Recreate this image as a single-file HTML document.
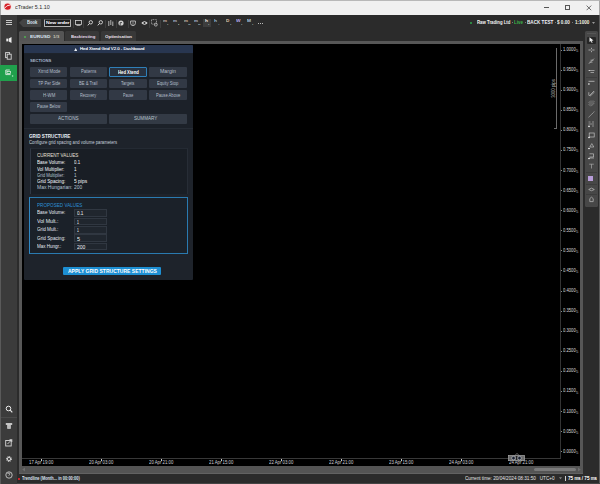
<!DOCTYPE html>
<html><head><meta charset="utf-8">
<style>
*{margin:0;padding:0;box-sizing:border-box}
html,body{width:600px;height:484px;overflow:hidden;background:#2b2b2b;font-family:"Liberation Sans",sans-serif;position:relative}
div,svg{position:absolute;white-space:nowrap}
span{white-space:nowrap}
</style></head><body>
<div style="left:0px;top:0px;width:600px;height:15px;background:#f0f0f0;border-top:1px solid #b8b8b8;border-left:1px solid #a8a8a8;border-right:1px solid #a8a8a8"></div>
<svg style="left:3px;top:2.4px" width="9" height="9" viewBox="0 0 9 9"><circle cx="4.6" cy="4.6" r="4" fill="#f6dede"/><circle cx="4.6" cy="4.6" r="3.2" fill="#d42027"/><path d="M1.6 6.2Q3.2 3.2 7.8 2.8" stroke="#fbeaea" stroke-width="1" fill="none"/></svg>
<div style="left:14.79px;top:4.71px;font-size:5.6px;line-height:5.6px;color:#2a2a2a;font-weight:400;transform:scaleX(0.957);transform-origin:0 0;">cTrader 5.1.10</div>
<div style="left:544px;top:7px;width:5px;height:0.9px;background:#555"></div>
<div style="left:564.8px;top:4.8px;width:5px;height:5px;border:0.9px solid #555"></div>
<svg style="left:586.3px;top:4.5px" width="6" height="6" viewBox="0 0 6 6"><path d="M0.6 0.6L5.2 5.2M5.2 0.6L0.6 5.2" stroke="#555" stroke-width="0.85"/></svg>
<div style="left:0px;top:15px;width:600px;height:14px;background:#2b2b2b"></div>
<div style="left:0px;top:15px;width:17px;height:469px;background:#3b3b3b;border-left:1px solid #5a5a5a"></div>
<div style="left:5.6px;top:20px;width:6.4px;height:0.9px;background:#c8c8c8"></div>
<div style="left:5.6px;top:22.1px;width:6.4px;height:0.9px;background:#c8c8c8"></div>
<div style="left:5.6px;top:24.2px;width:6.4px;height:0.9px;background:#c8c8c8"></div>
<svg style="left:19px;top:19px" width="23" height="8" viewBox="0 0 23 8"><path d="M0 3.8L4 0H22V8H4Z" fill="#444"/></svg>
<div style="left:26.83px;top:20.84px;font-size:4.7px;line-height:4.7px;color:#dce8f4;font-weight:700;transform:scaleX(0.882);transform-origin:0 0;">Book</div>
<div style="left:43.5px;top:19px;width:27.5px;height:8px;background:#1f1f1f;border:0.9px solid #b4b4b4;border-top-color:#505050;border-radius:1px"></div>
<div style="left:72.5px;top:19.5px;width:0.8px;height:8px;background:#3e3e3e"></div>
<div style="left:45.80px;top:20.99px;font-size:4.4px;line-height:4.4px;color:#f0f0f8;font-weight:400;transform:scaleX(1.155);transform-origin:0 0;text-shadow:0 0 0.3px #fff">New order</div>
<div style="left:83.3px;top:19.5px;width:0.8px;height:8px;background:#3e3e3e"></div>
<div style="left:104.8px;top:19.5px;width:0.8px;height:8px;background:#3e3e3e"></div>
<div style="left:116px;top:19.5px;width:0.8px;height:8px;background:#3e3e3e"></div>
<div style="left:127.5px;top:19.5px;width:0.8px;height:8px;background:#3e3e3e"></div>
<div style="left:149px;top:19.5px;width:0.8px;height:8px;background:#3e3e3e"></div>
<div style="left:160px;top:19.5px;width:0.8px;height:8px;background:#3e3e3e"></div>
<svg style="left:74.5px;top:19.5px" width="7" height="6" viewBox="0 0 7 6"><rect x="0.5" y="0.5" width="6" height="4" fill="none" stroke="#d4d4d4" stroke-width="0.8"/><path d="M1.5 5.5H5.5" stroke="#d4d4d4" stroke-width="0.7"/></svg>
<svg style="left:86.5px;top:19.5px" width="6" height="6" viewBox="0 0 6 6"><circle cx="3.8" cy="2.3" r="1.7" fill="none" stroke="#ddd" stroke-width="0.9"/><path d="M2.6 3.5L0.7 5.4" stroke="#ddd" stroke-width="1"/></svg>
<svg style="left:96.5px;top:19.5px" width="6" height="6" viewBox="0 0 6 6"><circle cx="3.8" cy="2.3" r="1.7" fill="none" stroke="#ddd" stroke-width="0.9"/><path d="M2.6 3.5L0.7 5.4" stroke="#ddd" stroke-width="1"/></svg>
<svg style="left:107.5px;top:19.5px" width="6" height="7" viewBox="0 0 6 7"><path d="M0.8 1V6M2.8 0V5M4.8 1.5V6" stroke="#d4d4d4" stroke-width="0.8"/></svg>
<svg style="left:118px;top:19.5px" width="6" height="6" viewBox="0 0 6 6"><circle cx="3" cy="3" r="2.6" fill="#d0d0d0"/><path d="M2.2 5.6V2.6H4" stroke="#2b2b2b" stroke-width="0.8" fill="none"/></svg>
<svg style="left:130px;top:19.5px" width="6" height="6" viewBox="0 0 6 6"><path d="M0.6 1H5.4V3.2Q5.4 5.4 3 5.8Q0.6 5.4 0.6 3.2Z" fill="none" stroke="#d4d4d4" stroke-width="0.8"/><path d="M3 1.5V5" stroke="#d4d4d4" stroke-width="0.6"/></svg>
<svg style="left:141.3px;top:19.6px" width="7" height="6" viewBox="0 0 7 6"><path d="M0.3 3Q3.5 -0.4 6.7 3Q3.5 6.4 0.3 3Z" fill="#e0e0e0"/><circle cx="3.5" cy="3" r="1.1" fill="#2b2b2b"/></svg>
<svg style="left:151px;top:19px" width="7" height="8" viewBox="0 0 7 8"><rect x="0.5" y="0.6" width="5" height="4.5" fill="none" stroke="#d4d4d4" stroke-width="0.6" stroke-dasharray="1 0.6"/><circle cx="4.8" cy="5.6" r="1.5" fill="none" stroke="#d0d0d0" stroke-width="0.7"/></svg>
<div style="left:163.12px;top:20.28px;font-size:3.8px;line-height:3.8px;color:#c8b8b0;font-weight:700;transform:scaleX(1.166);transform-origin:0 0;">m</div>
<div style="left:167.31px;top:24.15px;font-size:2.4px;line-height:2.4px;color:#b8c0c8;font-weight:700;transform:scaleX(0.955);transform-origin:0 0;">1</div>
<div style="left:173.32px;top:20.28px;font-size:3.8px;line-height:3.8px;color:#b0bcd0;font-weight:700;transform:scaleX(1.166);transform-origin:0 0;">m</div>
<div style="left:177.51px;top:24.15px;font-size:2.4px;line-height:2.4px;color:#b8c0c8;font-weight:700;transform:scaleX(0.955);transform-origin:0 0;">5</div>
<div style="left:183.82px;top:20.28px;font-size:3.8px;line-height:3.8px;color:#c8bca8;font-weight:700;transform:scaleX(1.166);transform-origin:0 0;">m</div>
<div style="left:188.01px;top:24.15px;font-size:2.4px;line-height:2.4px;color:#b8c0c8;font-weight:700;transform:scaleX(0.887);transform-origin:0 0;">15</div>
<div style="left:194.12px;top:20.28px;font-size:3.8px;line-height:3.8px;color:#b0bcd0;font-weight:700;transform:scaleX(1.166);transform-origin:0 0;">m</div>
<div style="left:198.31px;top:24.15px;font-size:2.4px;line-height:2.4px;color:#b8c0c8;font-weight:700;transform:scaleX(0.887);transform-origin:0 0;">30</div>
<div style="left:203px;top:19px;width:8px;height:7.7px;background:#3d3d3d"></div>
<div style="left:204.50px;top:20.28px;font-size:3.8px;line-height:3.8px;color:#f0e8e8;font-weight:700;transform:scaleX(1.285);transform-origin:0 0;">h</div>
<div style="left:207.71px;top:24.15px;font-size:2.4px;line-height:2.4px;color:#b8c0c8;font-weight:700;transform:scaleX(0.955);transform-origin:0 0;">1</div>
<div style="left:214.30px;top:20.28px;font-size:3.8px;line-height:3.8px;color:#98b8d8;font-weight:700;transform:scaleX(1.285);transform-origin:0 0;">h</div>
<div style="left:217.51px;top:24.15px;font-size:2.4px;line-height:2.4px;color:#b8c0c8;font-weight:700;transform:scaleX(0.955);transform-origin:0 0;">4</div>
<div style="left:226.11px;top:20.28px;font-size:3.8px;line-height:3.8px;color:#e0c8b0;font-weight:700;transform:scaleX(1.226);transform-origin:0 0;">D</div>
<div style="left:229.71px;top:24.15px;font-size:2.4px;line-height:2.4px;color:#b8c0c8;font-weight:700;transform:scaleX(0.955);transform-origin:0 0;">1</div>
<div style="left:236.31px;top:20.28px;font-size:3.8px;line-height:3.8px;color:#b8a8e8;font-weight:700;transform:scaleX(1.277);transform-origin:0 0;">W</div>
<div style="left:241.11px;top:24.15px;font-size:2.4px;line-height:2.4px;color:#b8c0c8;font-weight:700;transform:scaleX(0.955);transform-origin:0 0;">1</div>
<div style="left:247.31px;top:20.28px;font-size:3.8px;line-height:3.8px;color:#b0c8e4;font-weight:700;transform:scaleX(1.255);transform-origin:0 0;">M</div>
<div style="left:251.51px;top:24.15px;font-size:2.4px;line-height:2.4px;color:#b8c0c8;font-weight:700;transform:scaleX(0.955);transform-origin:0 0;">1</div>
<div style="left:257.5px;top:22.5px;width:1px;height:1px;background:#bbb"></div>
<div style="left:259.8px;top:22.5px;width:1px;height:1px;background:#bbb"></div>
<div style="left:262.1px;top:22.5px;width:1px;height:1px;background:#bbb"></div>
<div style="left:470.2px;top:21.8px;width:2px;height:2px;border-radius:1px;background:#2ea84a"></div>
<div style="left:476.83px;top:20.80px;font-size:4.8px;line-height:4.8px;color:#f4f4f4;font-weight:700;transform:scaleX(0.894);transform-origin:0 0;">Raw Trading Ltd</div>
<div style="left:512px;top:22.3px;width:1px;height:1px;background:#777"></div>
<div style="left:514.32px;top:20.80px;font-size:4.8px;line-height:4.8px;color:#3cb44a;font-weight:700;transform:scaleX(0.921);transform-origin:0 0;">Live</div>
<div style="left:525px;top:22.3px;width:1px;height:1px;background:#777"></div>
<div style="left:526.82px;top:20.80px;font-size:4.8px;line-height:4.8px;color:#eef2f8;font-weight:700;transform:scaleX(0.961);transform-origin:0 0;">BACK TEST</div>
<div style="left:555px;top:22.3px;width:1px;height:1px;background:#777"></div>
<div style="left:557.31px;top:20.80px;font-size:4.8px;line-height:4.8px;color:#f0f0f0;font-weight:700;transform:scaleX(0.965);transform-origin:0 0;">$ 0.00</div>
<div style="left:572.3px;top:22.3px;width:1px;height:1px;background:#777"></div>
<div style="left:574.82px;top:20.80px;font-size:4.8px;line-height:4.8px;color:#f4efe0;font-weight:700;transform:scaleX(0.962);transform-origin:0 0;">1:1000</div>
<svg style="left:592px;top:21.5px" width="3" height="2" viewBox="0 0 3 2"><path d="M0 0H3L1.5 2Z" fill="#999"/></svg>
<svg style="left:5.5px;top:36.8px" width="6" height="6" viewBox="0 0 6 6"><rect x="0.3" y="1.6" width="2" height="2.8" fill="#ececec"/><path d="M2.8 1.5L5.5 0V6L2.8 4.5Z" fill="#ececec"/></svg>
<svg style="left:5.3px;top:52.3px" width="7" height="8" viewBox="0 0 7 8"><rect x="0.6" y="0.6" width="4" height="5" fill="none" stroke="#d8d8d8" stroke-width="0.9"/><rect x="2.2" y="2.2" width="4" height="5" fill="#3b3b3b" stroke="#d8d8d8" stroke-width="0.9"/></svg>
<div style="left:0px;top:64.7px;width:17px;height:16px;background:#20a04c"></div>
<svg style="left:5px;top:69px" width="9" height="9" viewBox="0 0 9 9"><path d="M0.8 1H4.8M0.8 1V5.6H5.6" stroke="#f4f4f4" stroke-width="0.8" fill="none"/><rect x="2" y="2.6" width="3.6" height="2" fill="none" stroke="#f4f4f4" stroke-width="0.7"/><circle cx="7.6" cy="7" r="0.8" fill="#a8f0c0"/></svg>
<div style="left:1px;top:417px;width:16px;height:0.8px;background:#4a4a4a"></div>
<svg style="left:4.5px;top:405px" width="8" height="8" viewBox="0 0 8 8"><circle cx="3.5" cy="3.5" r="2.3" fill="none" stroke="#ececec" stroke-width="1"/><path d="M5.2 5.2L7.3 7.3" stroke="#ececec" stroke-width="1.1"/></svg>
<svg style="left:5px;top:421.5px" width="8" height="8" viewBox="0 0 8 8"><path d="M0.8 1.2H7.2V2.8H0.8Z" fill="#e4e4e4"/><path d="M2.3 2.8V6.8H5.7V2.8Z" fill="#e4e4e4"/><path d="M4 3.2V6.4" stroke="#3b3b3b" stroke-width="0.5"/></svg>
<svg style="left:5px;top:438.5px" width="8" height="8" viewBox="0 0 8 8"><rect x="0.7" y="1.5" width="5.5" height="5.5" fill="none" stroke="#d8d8d8" stroke-width="0.9"/><path d="M2.5 5L6.8 0.7M4.5 0.7H6.8V3" stroke="#d8d8d8" stroke-width="0.9" fill="none"/></svg>
<svg style="left:5px;top:454.5px" width="8" height="8" viewBox="0 0 8 8"><circle cx="4" cy="4" r="2.5" fill="none" stroke="#e4e4e4" stroke-width="1" stroke-dasharray="1.1 0.85"/><circle cx="4" cy="4" r="1.6" fill="none" stroke="#e4e4e4" stroke-width="0.9"/></svg>
<svg style="left:4.5px;top:471px" width="8" height="8" viewBox="0 0 8 8"><circle cx="4" cy="4" r="3.2" fill="none" stroke="#d8d8d8" stroke-width="0.8"/><path d="M2.6 3Q3 1.8 4.2 2Q5.3 2.4 4.5 3.6L3.8 4.6" stroke="#d8d8d8" stroke-width="0.8" fill="none"/></svg>
<div style="left:19px;top:31px;width:45px;height:11px;background:#555;border-radius:1.5px 1.5px 0 0"></div>
<div style="left:23.6px;top:35.5px;width:2px;height:2px;border-radius:1px;background:#52b052"></div>
<div style="left:29.81px;top:34.83px;font-size:4.1px;line-height:4.1px;color:#dce6f2;font-weight:700;transform:scaleX(1.179);transform-origin:0 0;">EURUSD</div>
<div style="left:53.32px;top:34.83px;font-size:4.1px;line-height:4.1px;color:#e8e4dc;font-weight:400;transform:scaleX(1.116);transform-origin:0 0;">1/3</div>
<div style="left:65.3px;top:31px;width:33.4px;height:10px;background:#383838;border-radius:1.5px 1.5px 0 0"></div>
<div style="left:70.53px;top:34.93px;font-size:4.1px;line-height:4.1px;color:#e6d8ec;font-weight:700;transform:scaleX(1.048);transform-origin:0 0;">Backtesting</div>
<div style="left:101.3px;top:31px;width:34.7px;height:10px;background:#383838;border-radius:1.5px 1.5px 0 0"></div>
<div style="left:105.12px;top:34.93px;font-size:4.1px;line-height:4.1px;color:#ece4ec;font-weight:700;transform:scaleX(1.081);transform-origin:0 0;">Optimisation</div>
<div style="left:19px;top:41px;width:564px;height:432.5px;background:#575757"></div>
<div style="left:22px;top:44px;width:558px;height:421.7px;background:#000"></div>
<div style="left:560px;top:44px;width:1px;height:414.5px;background:#333"></div>
<div style="left:22px;top:458px;width:539px;height:1px;background:#383838"></div>
<div style="left:561px;top:49.5px;width:0.9px;height:0.9px;background:#8a8a8a"></div>
<div style="left:563.03px;top:48.00px;font-size:4.8px;line-height:4.8px;color:#dcdcdc;font-weight:400;transform:scaleX(0.868);transform-origin:0 0;">1.0000</div>
<div style="left:575.63px;top:50.06px;font-size:2.8px;line-height:2.8px;color:#a8b0c0;font-weight:400;transform:scaleX(1.494);transform-origin:0 0;">5</div>
<div style="left:561px;top:69.5px;width:0.9px;height:0.9px;background:#8a8a8a"></div>
<div style="left:563.03px;top:68.08px;font-size:4.8px;line-height:4.8px;color:#dcdcdc;font-weight:400;transform:scaleX(0.868);transform-origin:0 0;">0.9500</div>
<div style="left:575.63px;top:70.14px;font-size:2.8px;line-height:2.8px;color:#a8b0c0;font-weight:400;transform:scaleX(1.494);transform-origin:0 0;">5</div>
<div style="left:561px;top:89.5px;width:0.9px;height:0.9px;background:#8a8a8a"></div>
<div style="left:563.03px;top:88.17px;font-size:4.8px;line-height:4.8px;color:#dcdcdc;font-weight:400;transform:scaleX(0.868);transform-origin:0 0;">0.9000</div>
<div style="left:575.63px;top:90.23px;font-size:2.8px;line-height:2.8px;color:#a8b0c0;font-weight:400;transform:scaleX(1.494);transform-origin:0 0;">5</div>
<div style="left:561px;top:109.5px;width:0.9px;height:0.9px;background:#8a8a8a"></div>
<div style="left:563.03px;top:108.25px;font-size:4.8px;line-height:4.8px;color:#dcdcdc;font-weight:400;transform:scaleX(0.868);transform-origin:0 0;">0.8500</div>
<div style="left:575.63px;top:110.31px;font-size:2.8px;line-height:2.8px;color:#a8b0c0;font-weight:400;transform:scaleX(1.494);transform-origin:0 0;">5</div>
<div style="left:561px;top:129.5px;width:0.9px;height:0.9px;background:#8a8a8a"></div>
<div style="left:563.03px;top:128.34px;font-size:4.8px;line-height:4.8px;color:#dcdcdc;font-weight:400;transform:scaleX(0.868);transform-origin:0 0;">0.8000</div>
<div style="left:575.63px;top:130.40px;font-size:2.8px;line-height:2.8px;color:#a8b0c0;font-weight:400;transform:scaleX(1.494);transform-origin:0 0;">5</div>
<div style="left:561px;top:149.5px;width:0.9px;height:0.9px;background:#8a8a8a"></div>
<div style="left:563.03px;top:148.42px;font-size:4.8px;line-height:4.8px;color:#dcdcdc;font-weight:400;transform:scaleX(0.868);transform-origin:0 0;">0.7500</div>
<div style="left:575.63px;top:150.48px;font-size:2.8px;line-height:2.8px;color:#a8b0c0;font-weight:400;transform:scaleX(1.494);transform-origin:0 0;">5</div>
<div style="left:561px;top:170.0px;width:0.9px;height:0.9px;background:#8a8a8a"></div>
<div style="left:563.03px;top:168.51px;font-size:4.8px;line-height:4.8px;color:#dcdcdc;font-weight:400;transform:scaleX(0.868);transform-origin:0 0;">0.7000</div>
<div style="left:575.63px;top:170.57px;font-size:2.8px;line-height:2.8px;color:#a8b0c0;font-weight:400;transform:scaleX(1.494);transform-origin:0 0;">5</div>
<div style="left:561px;top:190.0px;width:0.9px;height:0.9px;background:#8a8a8a"></div>
<div style="left:563.03px;top:188.59px;font-size:4.8px;line-height:4.8px;color:#dcdcdc;font-weight:400;transform:scaleX(0.868);transform-origin:0 0;">0.6500</div>
<div style="left:575.63px;top:190.65px;font-size:2.8px;line-height:2.8px;color:#a8b0c0;font-weight:400;transform:scaleX(1.494);transform-origin:0 0;">5</div>
<div style="left:561px;top:210.0px;width:0.9px;height:0.9px;background:#8a8a8a"></div>
<div style="left:563.03px;top:208.68px;font-size:4.8px;line-height:4.8px;color:#dcdcdc;font-weight:400;transform:scaleX(0.868);transform-origin:0 0;">0.6000</div>
<div style="left:575.63px;top:210.74px;font-size:2.8px;line-height:2.8px;color:#a8b0c0;font-weight:400;transform:scaleX(1.494);transform-origin:0 0;">5</div>
<div style="left:561px;top:230.0px;width:0.9px;height:0.9px;background:#8a8a8a"></div>
<div style="left:563.03px;top:228.76px;font-size:4.8px;line-height:4.8px;color:#dcdcdc;font-weight:400;transform:scaleX(0.868);transform-origin:0 0;">0.5500</div>
<div style="left:575.63px;top:230.82px;font-size:2.8px;line-height:2.8px;color:#a8b0c0;font-weight:400;transform:scaleX(1.494);transform-origin:0 0;">5</div>
<div style="left:561px;top:250.0px;width:0.9px;height:0.9px;background:#8a8a8a"></div>
<div style="left:563.03px;top:248.85px;font-size:4.8px;line-height:4.8px;color:#dcdcdc;font-weight:400;transform:scaleX(0.868);transform-origin:0 0;">0.5000</div>
<div style="left:575.63px;top:250.91px;font-size:2.8px;line-height:2.8px;color:#a8b0c0;font-weight:400;transform:scaleX(1.494);transform-origin:0 0;">5</div>
<div style="left:561px;top:270.0px;width:0.9px;height:0.9px;background:#8a8a8a"></div>
<div style="left:563.03px;top:268.93px;font-size:4.8px;line-height:4.8px;color:#dcdcdc;font-weight:400;transform:scaleX(0.868);transform-origin:0 0;">0.4500</div>
<div style="left:575.63px;top:270.99px;font-size:2.8px;line-height:2.8px;color:#a8b0c0;font-weight:400;transform:scaleX(1.494);transform-origin:0 0;">5</div>
<div style="left:561px;top:290.5px;width:0.9px;height:0.9px;background:#8a8a8a"></div>
<div style="left:563.03px;top:289.02px;font-size:4.8px;line-height:4.8px;color:#dcdcdc;font-weight:400;transform:scaleX(0.868);transform-origin:0 0;">0.4000</div>
<div style="left:575.63px;top:291.08px;font-size:2.8px;line-height:2.8px;color:#a8b0c0;font-weight:400;transform:scaleX(1.494);transform-origin:0 0;">5</div>
<div style="left:561px;top:310.5px;width:0.9px;height:0.9px;background:#8a8a8a"></div>
<div style="left:563.03px;top:309.10px;font-size:4.8px;line-height:4.8px;color:#dcdcdc;font-weight:400;transform:scaleX(0.868);transform-origin:0 0;">0.3500</div>
<div style="left:575.63px;top:311.16px;font-size:2.8px;line-height:2.8px;color:#a8b0c0;font-weight:400;transform:scaleX(1.494);transform-origin:0 0;">5</div>
<div style="left:561px;top:330.5px;width:0.9px;height:0.9px;background:#8a8a8a"></div>
<div style="left:563.03px;top:329.19px;font-size:4.8px;line-height:4.8px;color:#dcdcdc;font-weight:400;transform:scaleX(0.868);transform-origin:0 0;">0.3000</div>
<div style="left:575.63px;top:331.25px;font-size:2.8px;line-height:2.8px;color:#a8b0c0;font-weight:400;transform:scaleX(1.494);transform-origin:0 0;">5</div>
<div style="left:561px;top:350.5px;width:0.9px;height:0.9px;background:#8a8a8a"></div>
<div style="left:563.03px;top:349.27px;font-size:4.8px;line-height:4.8px;color:#dcdcdc;font-weight:400;transform:scaleX(0.868);transform-origin:0 0;">0.2500</div>
<div style="left:575.63px;top:351.33px;font-size:2.8px;line-height:2.8px;color:#a8b0c0;font-weight:400;transform:scaleX(1.494);transform-origin:0 0;">5</div>
<div style="left:561px;top:370.5px;width:0.9px;height:0.9px;background:#8a8a8a"></div>
<div style="left:563.03px;top:369.36px;font-size:4.8px;line-height:4.8px;color:#dcdcdc;font-weight:400;transform:scaleX(0.868);transform-origin:0 0;">0.2000</div>
<div style="left:575.63px;top:371.42px;font-size:2.8px;line-height:2.8px;color:#a8b0c0;font-weight:400;transform:scaleX(1.494);transform-origin:0 0;">5</div>
<div style="left:561px;top:390.5px;width:0.9px;height:0.9px;background:#8a8a8a"></div>
<div style="left:563.03px;top:389.44px;font-size:4.8px;line-height:4.8px;color:#dcdcdc;font-weight:400;transform:scaleX(0.868);transform-origin:0 0;">0.1500</div>
<div style="left:575.63px;top:391.50px;font-size:2.8px;line-height:2.8px;color:#a8b0c0;font-weight:400;transform:scaleX(1.494);transform-origin:0 0;">5</div>
<div style="left:561px;top:411.0px;width:0.9px;height:0.9px;background:#8a8a8a"></div>
<div style="left:563.03px;top:409.53px;font-size:4.8px;line-height:4.8px;color:#dcdcdc;font-weight:400;transform:scaleX(0.868);transform-origin:0 0;">0.1000</div>
<div style="left:575.63px;top:411.59px;font-size:2.8px;line-height:2.8px;color:#a8b0c0;font-weight:400;transform:scaleX(1.494);transform-origin:0 0;">5</div>
<div style="left:561px;top:431.0px;width:0.9px;height:0.9px;background:#8a8a8a"></div>
<div style="left:563.03px;top:429.61px;font-size:4.8px;line-height:4.8px;color:#dcdcdc;font-weight:400;transform:scaleX(0.868);transform-origin:0 0;">0.0500</div>
<div style="left:575.63px;top:431.67px;font-size:2.8px;line-height:2.8px;color:#a8b0c0;font-weight:400;transform:scaleX(1.494);transform-origin:0 0;">5</div>
<div style="left:561px;top:451.0px;width:0.9px;height:0.9px;background:#8a8a8a"></div>
<div style="left:563.03px;top:449.70px;font-size:4.8px;line-height:4.8px;color:#dcdcdc;font-weight:400;transform:scaleX(0.868);transform-origin:0 0;">0.0000</div>
<div style="left:575.63px;top:451.76px;font-size:2.8px;line-height:2.8px;color:#a8b0c0;font-weight:400;transform:scaleX(1.494);transform-origin:0 0;">5</div>
<div style="left:41.3px;top:458.5px;width:0.9px;height:2.3px;background:#c8c8c8"></div>
<div style="left:29.33px;top:460.89px;font-size:4.6px;line-height:4.6px;color:#d0d0d8;font-weight:400;transform:scaleX(0.934);transform-origin:0 0;">17 Apr 19:00</div>
<div style="left:101.3px;top:458.5px;width:0.9px;height:2.3px;background:#c8c8c8"></div>
<div style="left:89.33px;top:460.89px;font-size:4.6px;line-height:4.6px;color:#d0d0d8;font-weight:400;transform:scaleX(0.934);transform-origin:0 0;">20 Apr 03:00</div>
<div style="left:161.3px;top:458.5px;width:0.9px;height:2.3px;background:#c8c8c8"></div>
<div style="left:149.33px;top:460.89px;font-size:4.6px;line-height:4.6px;color:#d0d0d8;font-weight:400;transform:scaleX(0.934);transform-origin:0 0;">20 Apr 21:00</div>
<div style="left:221.3px;top:458.5px;width:0.9px;height:2.3px;background:#c8c8c8"></div>
<div style="left:209.33px;top:460.89px;font-size:4.6px;line-height:4.6px;color:#d0d0d8;font-weight:400;transform:scaleX(0.934);transform-origin:0 0;">21 Apr 15:00</div>
<div style="left:281.3px;top:458.5px;width:0.9px;height:2.3px;background:#c8c8c8"></div>
<div style="left:269.33px;top:460.89px;font-size:4.6px;line-height:4.6px;color:#d0d0d8;font-weight:400;transform:scaleX(0.934);transform-origin:0 0;">22 Apr 03:00</div>
<div style="left:341.3px;top:458.5px;width:0.9px;height:2.3px;background:#c8c8c8"></div>
<div style="left:329.33px;top:460.89px;font-size:4.6px;line-height:4.6px;color:#d0d0d8;font-weight:400;transform:scaleX(0.934);transform-origin:0 0;">22 Apr 21:00</div>
<div style="left:401.3px;top:458.5px;width:0.9px;height:2.3px;background:#c8c8c8"></div>
<div style="left:389.33px;top:460.89px;font-size:4.6px;line-height:4.6px;color:#d0d0d8;font-weight:400;transform:scaleX(0.934);transform-origin:0 0;">23 Apr 15:00</div>
<div style="left:461.3px;top:458.5px;width:0.9px;height:2.3px;background:#c8c8c8"></div>
<div style="left:449.33px;top:460.89px;font-size:4.6px;line-height:4.6px;color:#d0d0d8;font-weight:400;transform:scaleX(0.934);transform-origin:0 0;">24 Apr 03:00</div>
<div style="left:521.3px;top:458.5px;width:0.9px;height:2.3px;background:#c8c8c8"></div>
<div style="left:509.33px;top:460.89px;font-size:4.6px;line-height:4.6px;color:#d0d0d8;font-weight:400;transform:scaleX(0.934);transform-origin:0 0;">24 Apr 21:00</div>
<div style="left:556px;top:48.3px;width:0.7px;height:80px;background:#6a6a6a"></div>
<div style="left:554px;top:128.3px;width:2.7px;height:0.7px;background:#6a6a6a"></div>
<div style="left:533px;top:86px;width:40px;text-align:center;font-size:4.5px;line-height:5px;color:#b0b0b0;transform:rotate(-90deg) scaleX(0.95)">3000 pips</div>
<svg style="left:507.5px;top:452.5px" width="17" height="8.5" viewBox="0 0 17 8.5"><rect x="0.5" y="2.5" width="16" height="5.2" fill="#6c6c6c" stroke="#a8a8a8" stroke-width="0.7"/><circle cx="5.5" cy="5.1" r="1.8" fill="#1a2030" stroke="#c8ccd4" stroke-width="0.6"/><circle cx="11.5" cy="5.1" r="1.8" fill="#1a2030" stroke="#c8ccd4" stroke-width="0.6"/><path d="M7 2.4L9 0.4L11 2.4" stroke="#b0b0b0" stroke-width="0.6" fill="none"/><rect x="8" y="3" width="1.2" height="4" fill="#222"/></svg>
<div style="left:22px;top:465.7px;width:558px;height:7.5px;background:#545454"></div>
<svg style="left:21px;top:467px" width="5" height="5" viewBox="0 0 5 5"><path d="M4 0.6L1.2 2.5L4 4.4Z" fill="#6e6e6e"/></svg>
<div style="left:19px;top:472.6px;width:564px;height:0.9px;background:#626262"></div>
<div style="left:533.7px;top:468px;width:42.3px;height:3.2px;border-radius:1.6px;background:#7a7a7a"></div>
<svg style="left:576.5px;top:467px" width="5" height="5" viewBox="0 0 5 5"><path d="M1 0.6L3.8 2.5L1 4.4Z" fill="#6e6e6e"/></svg>
<div style="left:585.1px;top:31.2px;width:12.8px;height:175.5px;background:#474747;border-radius:1.5px"></div>
<div style="left:587px;top:32.5px;width:9px;height:1.2px;background:#565656"></div>
<div style="left:587px;top:36.8px;width:8.5px;height:6.8px;background:#262626;border-radius:1px"></div>
<svg style="left:589px;top:37.3px" width="5" height="6" viewBox="0 0 5 6"><path d="M0.5 0.3L4.5 3.5L2.6 3.7L3.6 5.6L2.8 5.9L1.9 4L0.5 5Z" fill="#f4f4f4"/></svg>
<div style="left:586px;top:76.5px;width:11px;height:0.7px;background:#3c3c3c"></div>
<div style="left:586px;top:172px;width:11px;height:0.7px;background:#3c3c3c"></div>
<div style="left:586px;top:184px;width:11px;height:0.7px;background:#3c3c3c"></div>
<div style="left:586px;top:194px;width:11px;height:0.7px;background:#3c3c3c"></div>
<svg style="left:588px;top:47.0px" width="7" height="7" viewBox="0 0 7 7"><path d="M0.5 3H2.8M4.2 3H6.5M3.5 0.8V2.3M3.5 3.7V5.2" stroke="#cfcfcf" stroke-width="0.7"/></svg>
<svg style="left:588px;top:57.5px" width="7" height="7" viewBox="0 0 7 7"><path d="M0.8 5.8L6 0.6M1.5 4.2H4.5M2.5 2.2H5.5" stroke="#bdbdbd" stroke-width="0.7"/></svg>
<svg style="left:588px;top:68.0px" width="7" height="7" viewBox="0 0 7 7"><path d="M0.5 2.5H6.5M2.5 4.5H6" stroke="#c0c0c0" stroke-width="0.7"/><circle cx="1.4" cy="2.5" r="0.6" fill="#ddd"/></svg>
<svg style="left:588px;top:78.5px" width="7" height="7" viewBox="0 0 7 7"><path d="M0.5 2.3H6.5" stroke="#c0c0c0" stroke-width="0.8"/><circle cx="0.9" cy="5" r="0.8" fill="#fff"/></svg>
<svg style="left:588px;top:89.5px" width="7" height="7" viewBox="0 0 7 7"><path d="M1 6L6 1M2 6.2L6.5 2M0.8 2.2V5.5" stroke="#c0c0c0" stroke-width="0.7"/></svg>
<svg style="left:588px;top:100.0px" width="7" height="7" viewBox="0 0 7 7"><path d="M0.5 5L5 0.5M1.5 6L6.5 1M3 6.3L6.5 2.8M0.5 3L3 0.5" stroke="#8c8c8c" stroke-width="0.8"/></svg>
<svg style="left:588px;top:110.5px" width="7" height="7" viewBox="0 0 7 7"><path d="M0.6 6.3L6.2 0.7" stroke="#c8c8c8" stroke-width="0.9" stroke-dasharray="1 0.5"/></svg>
<svg style="left:588px;top:121.0px" width="7" height="7" viewBox="0 0 7 7"><path d="M0.5 1H2.5M4 1H6M0.5 3H6M4 5H6" stroke="#b0b0b0" stroke-width="0.7"/><circle cx="1" cy="5.4" r="0.8" fill="#fff"/></svg>
<svg style="left:588px;top:131.5px" width="7" height="7" viewBox="0 0 7 7"><rect x="1.2" y="1" width="5" height="4" fill="none" stroke="#c0c0c0" stroke-width="0.7"/><circle cx="1" cy="5.5" r="0.8" fill="#fff"/></svg>
<svg style="left:588px;top:142.5px" width="7" height="7" viewBox="0 0 7 7"><path d="M3.8 0.6L5.8 4H1.8Z" fill="none" stroke="#c0c0c0" stroke-width="0.7"/><circle cx="1" cy="5.5" r="0.8" fill="#fff"/></svg>
<svg style="left:588px;top:152.5px" width="7" height="7" viewBox="0 0 7 7"><path d="M1.5 0.8H5.5V4H1.5M1.5 5H6" fill="none" stroke="#c0c0c0" stroke-width="0.7"/><circle cx="1" cy="5.5" r="0.8" fill="#fff"/></svg>
<svg style="left:588px;top:162.5px" width="7" height="7" viewBox="0 0 7 7"><path d="M1.2 1.2H5.8M3.5 1.2V5.5" stroke="#aaa" stroke-width="0.7"/></svg>
<svg style="left:588px;top:185.5px" width="7" height="7" viewBox="0 0 7 7"><path d="M0.7 3.5Q3.5 0.7 6.3 3.5Q3.5 6 0.7 3.5Z" fill="none" stroke="#c0c0c0" stroke-width="0.7"/></svg>
<svg style="left:588px;top:196.0px" width="7" height="7" viewBox="0 0 7 7"><path d="M1.8 2.6Q3.5 -0.3 5.2 2.6V5.6H1.8Z" fill="none" stroke="#c0c0c0" stroke-width="0.7"/></svg>
<div style="left:587.8px;top:175.5px;width:5.5px;height:5.8px;background:#b79cd8"></div>
<div style="left:23.7px;top:45.2px;width:169.3px;height:235.3px;background:#1e232b;border-radius:1px"></div>
<div style="left:23.7px;top:45.2px;width:169.3px;height:7.9px;background:#283650;border-radius:1px 1px 0 0"></div>
<div style="left:23.7px;top:54px;width:169.3px;height:75px;background:#1c2129"></div>
<svg style="left:74px;top:47.7px" width="3.4" height="3.4" viewBox="0 0 3.4 3.4"><path d="M1.7 0.1L3.3 3.1H0.1Z" fill="#eef2f6"/></svg>
<div style="left:79.63px;top:47.49px;font-size:4.4px;line-height:4.4px;color:#e8eef6;font-weight:400;transform:scaleX(0.979);transform-origin:0 0;text-shadow:0 0 0.3px #fff">Hed Xtend Grid V2.0 - Dashboard</div>
<div style="left:29.83px;top:58.89px;font-size:4.4px;line-height:4.4px;color:#a8b8cc;font-weight:700;transform:scaleX(0.950);transform-origin:0 0;">SECTIONS</div>
<div style="left:29.9px;top:66.8px;width:37.6px;height:9.8px;background:#323945;border-radius:1px"></div>
<div style="left:37.53px;top:69.94px;font-size:4.7px;line-height:4.7px;color:#b4becb;font-weight:400;transform:scaleX(0.922);transform-origin:0 0;">Xtrnd Mode</div>
<div style="left:69.5px;top:66.8px;width:37.6px;height:9.8px;background:#323945;border-radius:1px"></div>
<div style="left:80.64px;top:69.94px;font-size:4.7px;line-height:4.7px;color:#b4becb;font-weight:400;transform:scaleX(0.878);transform-origin:0 0;">Patterns</div>
<div style="left:109.2px;top:66.8px;width:37.6px;height:9.8px;background:#28313f;border:0.7px solid #2f7fb8;border-radius:1px"></div>
<div style="left:117.53px;top:69.80px;font-size:5px;line-height:5px;color:#ffffff;font-weight:700;transform:scaleX(0.842);transform-origin:0 0;">Hed Xtend</div>
<div style="left:149px;top:66.8px;width:37.6px;height:9.8px;background:#323945;border-radius:1px"></div>
<div style="left:159.84px;top:69.94px;font-size:4.7px;line-height:4.7px;color:#b4becb;font-weight:400;transform:scaleX(1.111);transform-origin:0 0;">Margin</div>
<div style="left:29.9px;top:78.6px;width:37.6px;height:9.8px;background:#323945;border-radius:1px"></div>
<div style="left:37.53px;top:81.74px;font-size:4.7px;line-height:4.7px;color:#b4becb;font-weight:400;transform:scaleX(0.887);transform-origin:0 0;">TP Per Side</div>
<div style="left:69.5px;top:78.6px;width:37.6px;height:9.8px;background:#323945;border-radius:1px"></div>
<div style="left:79.13px;top:81.74px;font-size:4.7px;line-height:4.7px;color:#b4becb;font-weight:400;transform:scaleX(0.879);transform-origin:0 0;">BE &amp; Trail</div>
<div style="left:109.2px;top:78.6px;width:37.6px;height:9.8px;background:#323945;border-radius:1px"></div>
<div style="left:121.34px;top:81.74px;font-size:4.7px;line-height:4.7px;color:#b4becb;font-weight:400;transform:scaleX(0.867);transform-origin:0 0;">Targets</div>
<div style="left:149px;top:78.6px;width:37.6px;height:9.8px;background:#323945;border-radius:1px"></div>
<div style="left:157.13px;top:81.74px;font-size:4.7px;line-height:4.7px;color:#b4becb;font-weight:400;transform:scaleX(0.890);transform-origin:0 0;">Equity Stop</div>
<div style="left:29.9px;top:90.4px;width:37.6px;height:9.8px;background:#323945;border-radius:1px"></div>
<div style="left:42.53px;top:93.54px;font-size:4.7px;line-height:4.7px;color:#b4becb;font-weight:400;transform:scaleX(0.930);transform-origin:0 0;">H-WM</div>
<div style="left:69.5px;top:90.4px;width:37.6px;height:9.8px;background:#323945;border-radius:1px"></div>
<div style="left:80.15px;top:93.54px;font-size:4.7px;line-height:4.7px;color:#b4becb;font-weight:400;transform:scaleX(0.823);transform-origin:0 0;">Recovery</div>
<div style="left:109.2px;top:90.4px;width:37.6px;height:9.8px;background:#323945;border-radius:1px"></div>
<div style="left:122.85px;top:93.54px;font-size:4.7px;line-height:4.7px;color:#b4becb;font-weight:400;transform:scaleX(0.774);transform-origin:0 0;">Pause</div>
<div style="left:149px;top:90.4px;width:37.6px;height:9.8px;background:#323945;border-radius:1px"></div>
<div style="left:155.63px;top:93.54px;font-size:4.7px;line-height:4.7px;color:#b4becb;font-weight:400;transform:scaleX(0.880);transform-origin:0 0;">Pause Above</div>
<div style="left:29.9px;top:102.1px;width:37.6px;height:9.8px;background:#323945;border-radius:1px"></div>
<div style="left:37.04px;top:105.24px;font-size:4.7px;line-height:4.7px;color:#b4becb;font-weight:400;transform:scaleX(0.852);transform-origin:0 0;">Pause Below</div>
<div style="left:29.9px;top:114px;width:77.2px;height:9.8px;background:#333a45;border-radius:1px"></div>
<div style="left:57.81px;top:117.24px;font-size:4.5px;line-height:4.5px;color:#b8c2ce;font-weight:400;transform:scaleX(1.033);transform-origin:0 0;">ACTIONS</div>
<div style="left:109.2px;top:114px;width:77.5px;height:9.8px;background:#333a45;border-radius:1px"></div>
<div style="left:133.82px;top:117.24px;font-size:4.5px;line-height:4.5px;color:#b8c2ce;font-weight:400;transform:scaleX(1.019);transform-origin:0 0;">SUMMARY</div>
<div style="left:23.7px;top:128.2px;width:169.3px;height:0.7px;background:#262c35"></div>
<div style="left:28.82px;top:134.00px;font-size:5px;line-height:5px;color:#e8eef6;font-weight:700;transform:scaleX(0.925);transform-origin:0 0;">GRID STRUCTURE</div>
<div style="left:28.83px;top:140.30px;font-size:5px;line-height:5px;color:#c8d2de;font-weight:400;transform:scaleX(0.848);transform-origin:0 0;">Configure grid spacing and volume parameters</div>
<div style="left:29.7px;top:147.8px;width:158px;height:46px;background:#191e25;border-left:0.9px solid #303844;border-top:0.5px solid #242a33;border-right:0.6px solid #272d36"></div>
<div style="left:36.82px;top:153.10px;font-size:5px;line-height:5px;color:#e8e0d8;font-weight:400;transform:scaleX(0.917);transform-origin:0 0;">CURRENT VALUES</div>
<div style="left:36.82px;top:160.40px;font-size:5px;line-height:5px;color:#f4f8fc;font-weight:400;transform:scaleX(0.919);transform-origin:0 0;">Base Volume:</div>
<div style="left:74.13px;top:160.40px;font-size:5px;line-height:5px;color:#f4f8fc;font-weight:400;transform:scaleX(0.870);transform-origin:0 0;">0.1</div>
<div style="left:36.82px;top:166.50px;font-size:5px;line-height:5px;color:#f4f8fc;font-weight:400;transform:scaleX(0.920);transform-origin:0 0;">Vol Multiplier:</div>
<div style="left:74.12px;top:166.50px;font-size:5px;line-height:5px;color:#f4f8fc;font-weight:400;transform:scaleX(0.924);transform-origin:0 0;">1</div>
<div style="left:36.83px;top:172.70px;font-size:5px;line-height:5px;color:#b8c4d4;font-weight:400;transform:scaleX(0.848);transform-origin:0 0;">Grid Multiplier:</div>
<div style="left:74.12px;top:172.70px;font-size:5px;line-height:5px;color:#b8c4d4;font-weight:400;transform:scaleX(0.924);transform-origin:0 0;">1</div>
<div style="left:36.81px;top:178.80px;font-size:5px;line-height:5px;color:#f4f8fc;font-weight:400;transform:scaleX(0.937);transform-origin:0 0;">Grid Spacing:</div>
<div style="left:74.10px;top:178.80px;font-size:5px;line-height:5px;color:#f4f8fc;font-weight:400;transform:scaleX(0.981);transform-origin:0 0;">5 pips</div>
<div style="left:36.80px;top:185.40px;font-size:5px;line-height:5px;color:#b8c4d4;font-weight:400;transform:scaleX(1.003);transform-origin:0 0;">Max Hungarian:</div>
<div style="left:74.11px;top:185.40px;font-size:5px;line-height:5px;color:#b8c4d4;font-weight:400;transform:scaleX(0.969);transform-origin:0 0;">200</div>
<div style="left:29px;top:196.6px;width:158.5px;height:57.2px;background:#1b2129;border:0.9px solid #2a7ab0;border-left:1.1px solid #2f88c4"></div>
<div style="left:36.82px;top:203.40px;font-size:5px;line-height:5px;color:#2d8fd5;font-weight:400;transform:scaleX(0.924);transform-origin:0 0;">PROPOSED VALUES</div>
<div style="left:36.82px;top:210.40px;font-size:5px;line-height:5px;color:#e4eaf2;font-weight:400;transform:scaleX(0.919);transform-origin:0 0;">Base Volume:</div>
<div style="left:74.1px;top:209.1px;width:32.9px;height:7.6px;background:#20262e;border:0.6px solid #303741"></div>
<div style="left:76.82px;top:211.20px;font-size:5px;line-height:5px;color:#eef2f8;font-weight:400;transform:scaleX(0.916);transform-origin:0 0;">0.1</div>
<div style="left:36.79px;top:218.90px;font-size:5px;line-height:5px;color:#e4eaf2;font-weight:400;transform:scaleX(1.041);transform-origin:0 0;">Vol Mult.:</div>
<div style="left:74.1px;top:217.8px;width:32.9px;height:7.6px;background:#20262e;border:0.6px solid #303741"></div>
<div style="left:76.87px;top:219.90px;font-size:5px;line-height:5px;color:#eef2f8;font-weight:400;transform:scaleX(0.672);transform-origin:0 0;">1</div>
<div style="left:36.81px;top:226.90px;font-size:5px;line-height:5px;color:#e4eaf2;font-weight:400;transform:scaleX(0.927);transform-origin:0 0;">Grid Mult.:</div>
<div style="left:74.1px;top:226.1px;width:32.9px;height:7.6px;background:#20262e;border:0.6px solid #303741"></div>
<div style="left:76.87px;top:228.20px;font-size:5px;line-height:5px;color:#eef2f8;font-weight:400;transform:scaleX(0.672);transform-origin:0 0;">1</div>
<div style="left:36.81px;top:235.70px;font-size:5px;line-height:5px;color:#e4eaf2;font-weight:400;transform:scaleX(0.937);transform-origin:0 0;">Grid Spacing:</div>
<div style="left:74.1px;top:234.4px;width:32.9px;height:7.6px;background:#20262e;border:0.6px solid #303741"></div>
<div style="left:76.78px;top:236.50px;font-size:5px;line-height:5px;color:#eef2f8;font-weight:400;transform:scaleX(1.092);transform-origin:0 0;">5</div>
<div style="left:36.82px;top:244.30px;font-size:5px;line-height:5px;color:#e4eaf2;font-weight:400;transform:scaleX(0.903);transform-origin:0 0;">Max Hungr.:</div>
<div style="left:74.1px;top:242.9px;width:32.9px;height:7.6px;background:#20262e;border:0.6px solid #303741"></div>
<div style="left:76.80px;top:245.00px;font-size:5px;line-height:5px;color:#eef2f8;font-weight:400;transform:scaleX(1.007);transform-origin:0 0;">200</div>
<div style="left:62.8px;top:267.3px;width:98.2px;height:7.4px;background:#1d8fd3;border-radius:1px"></div>
<div style="left:68.00px;top:269.10px;font-size:5px;line-height:5px;color:#ffffff;font-weight:700;transform:scaleX(1.003);transform-origin:0 0;">APPLY GRID STRUCTURE SETTINGS</div>
<div style="left:17px;top:473.5px;width:582px;height:10.5px;background:#2b2b2b"></div>
<div style="left:599px;top:15px;width:1px;height:469px;background:#5a5a5a"></div>
<div style="left:17px;top:483.2px;width:583px;height:0.8px;background:#444"></div>
<div style="left:18px;top:477.6px;width:2.2px;height:2.2px;background:#c8252b"></div>
<div style="left:22.34px;top:476.79px;font-size:4.6px;line-height:4.6px;color:#dce4f0;font-weight:700;transform:scaleX(0.858);transform-origin:0 0;">Trendline (Month... in 00:00:00)</div>
<div style="left:464.51px;top:476.79px;font-size:4.6px;line-height:4.6px;color:#e8e8e8;font-weight:400;transform:scaleX(1.013);transform-origin:0 0;">Current time: 20/04/2024 08:31:50&nbsp;&nbsp;&nbsp;UTC+0</div>
<svg style="left:558.5px;top:477px" width="3" height="2.5" viewBox="0 0 3 2.5"><path d="M0 0.3H3L1.5 2.3Z" fill="#888"/></svg>
<div style="left:565.2px;top:476px;width:0.9px;height:5px;background:#d0d0d0"></div>
<div style="left:568.32px;top:476.54px;font-size:4.7px;line-height:4.7px;color:#f4f4f4;font-weight:400;transform:scaleX(0.981);transform-origin:0 0;text-shadow:0 0 0.3px #fff">75 ms / 75 ms</div>
</body></html>
